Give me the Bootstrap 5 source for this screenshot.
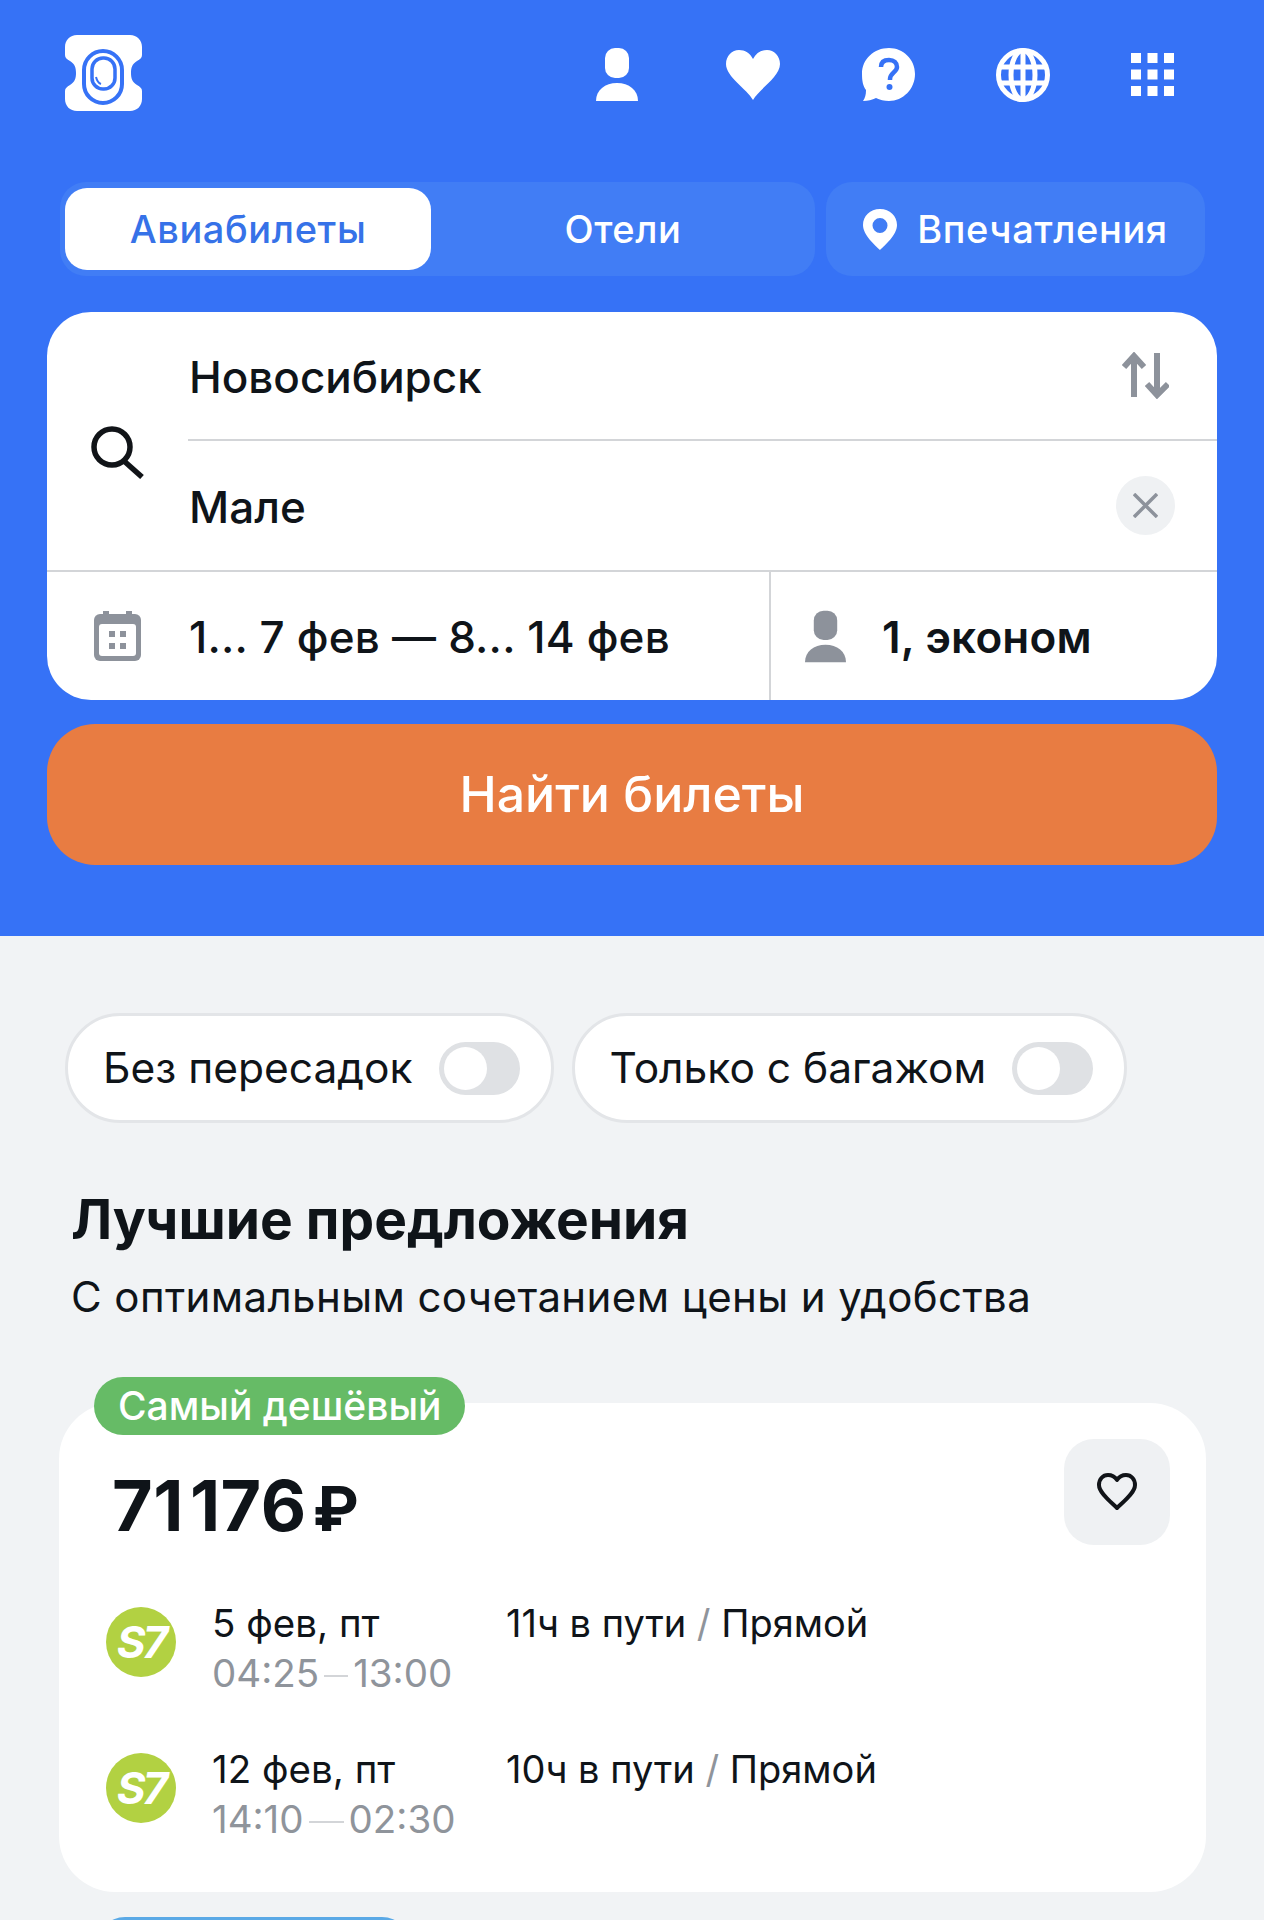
<!DOCTYPE html>
<html lang="ru">
<head>
  <meta charset="UTF-8" />
  <meta name="viewport" content="width=device-width, initial-scale=1" />
  <title>Авиабилеты</title>
  <link href="https://cdn.jsdelivr.net/npm/bootstrap@5.3.0/dist/css/bootstrap.min.css" rel="stylesheet" />
  <style>
    html, body {
      height: 1920px;
      overflow: hidden;
    }
    body {
      background: #f1f3f5;
      color: #0f1419;
      font-family: Inter, "Noto Sans", sans-serif;
    }
    .hero {
      background: #3672f6;
      height: 936px;
      padding: 35px 47px 0;
    }
    .brand-logo {
      margin-left: 18px;
    }
    .top-icons {
      gap: 81px;
      margin-right: 43px;
      margin-top: 3px;
    }
    .top-icons .first-icon {
      margin-right: 7px;
    }
    .top-icons .heart-icon {
      margin-right: 1px;
    }
    .tabs-row {
      margin-top: 71px;
      margin-left: 13px;
      margin-right: 12px;
      gap: 11px;
    }
    .tabs-group, .tab-single {
      background: #417df5;
      border-radius: 26px;
      height: 94px;
    }
    .tabs-group {
      width: 755px;
      padding: 6px 0 6px 5px;
    }
    .tab-single {
      width: 379px;
      gap: 20px;
    }
    .tab-item {
      color: #fff;
      font-size: 38px;
      font-weight: 500;
      letter-spacing: .6px;
    }
    .tab-active {
      background: #fff;
      color: #3672e8;
      width: 366px;
      height: 82px;
      border-radius: 22px;
    }
    .search-box {
      background: #fff;
      border-radius: 44px;
      margin-top: 36px;
      height: 388px;
      overflow: hidden;
      font-size: 44px;
      font-weight: 500;
    }
    .search-icon-col {
      width: 141px;
      padding: 22px 0 0 44px;
    }
    .search-line {
      height: 129px;
      padding-left: 1px;
    }
    .field-text {
      padding-top: 3px;
    }
    .field-low {
      padding-top: 1px;
      letter-spacing: .2px;
    }
    .line-sep {
      border-bottom: 2px solid #d3d5d8;
    }
    .swap-icon {
      margin-right: 48px;
    }
    .clear-btn {
      width: 59px;
      height: 59px;
      margin-right: 42px;
      background: #eff1f3;
    }
    .search-bottom {
      height: 130px;
      border-top: 2px solid #d3d5d8;
    }
    .dates-cell {
      width: 724px;
      padding-left: 47px;
      gap: 48px;
      border-right: 2px solid #d3d5d8;
    }
    .people-cell {
      padding-left: 34px;
      gap: 36px;
      font-weight: 600;
    }
    .find-btn {
      display: block;
      width: 100%;
      height: 141px;
      margin-top: 24px;
      border: 0;
      border-radius: 48px;
      background: #e87c42;
      color: #fff;
      font-size: 50px;
      font-weight: 500;
    }
    .find-btn:hover {
      background: #e87c42;
      color: #fff;
    }
    .filters {
      margin-top: 77px;
      padding-left: 65px;
      gap: 18px;
    }
    .filter-pill {
      height: 110px;
      padding: 0 31px 0 35px;
      gap: 26px;
      background: #fff;
      border: 3px solid #e3e5e8;
      border-radius: 55px;
      font-size: 42.500px;
    }
    .toggle-track {
      display: block;
      width: 81px;
      height: 53px;
      padding: 5px;
      background: #dfe1e4;
      border-radius: 27px;
    }
    .toggle-knob {
      display: block;
      width: 43px;
      height: 43px;
      background: #fff;
      border-radius: 50%;
    }
    .best-title {
      margin: 64px 0 0 71px;
      font-size: 55px;
      font-weight: 700;
      line-height: 64px;
    }
    .best-sub {
      margin: 20px 0 0 71px;
      font-size: 42px;
      line-height: 52px;
      letter-spacing: .4px;
    }
    .offer-card {
      margin: 80px 58px 0 59px;
      height: 489px;
      border: 0;
      border-radius: 56px;
      padding: 0 36px 0 47px;
    }
    .offer-tag {
      position: absolute;
      top: -26px;
      left: 35px;
      height: 58px;
      padding: 0 24px;
      background: #66bb66;
      color: #fff;
      border-radius: 29px;
      font-size: 39px;
      font-weight: 500;
      line-height: 58px;
    }
    .price {
      margin: 0 0 0 6px;
      padding-top: 63px;
      font-size: 70px;
      font-weight: 700;
      line-height: 80px;
      letter-spacing: .5px;
    }
    .price-currency {
      font-size: 62px;
      margin-left: 6px;
    }
    .fav-btn {
      width: 106px;
      height: 106px;
      margin-top: 36px;
      border-radius: 30px;
      background: #eff1f3;
    }
    .flight-row {
      height: 147px;
      font-size: 38.500px;
      line-height: 50px;
    }
    .flight-first {
      margin-top: 52px;
    }
    .s7-logo {
      width: 70px;
      height: 70px;
      background: #b2d142;
      color: #fff;
      font-size: 44px;
      font-weight: 700;
      font-style: italic;
      letter-spacing: -3px;
      margin-top: 6px;
      margin-right: 36px;
    }
    .flight-dates {
      width: 294px;
      margin-top: -3px;
    }
    .flight-route {
      margin-top: -3px;
      font-size: 38px;
    }
    .flight-times {
      color: #8f949b;
    }
    .time-dash {
      display: inline-block;
      height: 2px;
      background: #d3d5d8;
      vertical-align: middle;
      margin: 0 5px;
    }
    .flight-slash {
      color: #8f949b;
    }
    .next-clip {
      height: 3px;
      margin: 25px 0 0 96px;
      width: 315px;
      overflow: hidden;
    }
    .next-tag {
      height: 58px;
      background: #5aa9e6;
      border-radius: 29px;
    }
  </style>
</head>
<body>

<div class="hero">
  <div class="d-flex align-items-center justify-content-between">
    <!-- логотип -->
    <svg class="brand-logo" width="77" height="76" viewBox="0 0 77 76">
      <path fill="#fff" d="M12 0H65C72 0 77 5 77 12V20C77 23 75 24 72 26C67 29 66 33 66 38C66 43 67 47 72 50C75 52 77 53 77 56V64C77 71 72 76 65 76H12C5 76 0 71 0 64V56C0 53 2 52 5 50C10 47 11 43 11 38C11 33 10 29 5 26C2 24 0 23 0 20V12C0 5 5 0 12 0Z" />
      <rect x="19" y="16" width="38" height="52" rx="19" fill="none" stroke="#3672f6" stroke-width="4" />
      <rect x="27" y="23" width="23" height="31" rx="11" fill="none" stroke="#3672f6" stroke-width="3.500" />
      <path d="M31 42C32 46 33 48 36 49" fill="none" stroke="#3672f6" stroke-width="2" />
    </svg>
    <div class="top-icons d-flex align-items-center">
      <svg class="first-icon" width="42" height="53" viewBox="0 0 42 53">
        <rect x="9" width="24" height="30" rx="10" fill="#fff" />
        <path fill="#fff" d="M0 53C0 42 9 35 21 35C33 35 42 42 42 53Z" />
      </svg>
      <svg class="heart-icon" width="54" height="50" viewBox="0 0 54 50">
        <path fill="#fff" d="M27 50C21 39 0 27 0 14C0 6 6 0 13 0C19 0 24 3 27 9C30 3 35 0 41 0C48 0 54 6 54 14C54 27 33 39 27 50Z" />
      </svg>
      <svg width="53" height="53" viewBox="0 0 53 53">
        <path fill="#fff" d="M27 0C41 0 53 11 53 26C53 41 41 53 27 53C22 53 18 52 14 50C10 52 6 53 1 53C3 50 4 47 4 42C1 38 0 33 0 26C0 11 12 0 27 0Z" />
        <path fill="none" stroke="#3672f6" stroke-width="4.500" d="M19 19C19 14 22 12 27 12C32 12 35 15 35 19C35 24 28 25 28 31V32" />
        <circle cx="27.500" cy="39" r="3" fill="#3672f6" />
      </svg>
      <svg width="54" height="54" viewBox="0 0 54 54" fill="none" stroke="#fff" stroke-width="5">
        <circle cx="27" cy="27" r="24.500" />
        <ellipse cx="27" cy="27" rx="12" ry="24.500" />
        <path d="M27 2V52M5 19H49M5 35H49" />
      </svg>
      <svg width="43" height="43" viewBox="0 0 43 43" fill="#fff">
        <rect width="10" height="10" /><rect x="16.500" width="10" height="10" /><rect x="33" width="10" height="10" />
        <rect y="16.500" width="10" height="10" /><rect x="16.500" y="16.500" width="10" height="10" /><rect x="33" y="16.500" width="10" height="10" />
        <rect y="33" width="10" height="10" /><rect x="16.500" y="33" width="10" height="10" /><rect x="33" y="33" width="10" height="10" />
      </svg>
    </div>
  </div>

  <!-- вкладки -->
  <div class="tabs-row d-flex">
    <div class="tabs-group d-flex">
      <div class="tab-item tab-active d-flex align-items-center justify-content-center">Авиабилеты</div>
      <div class="tab-item flex-grow-1 d-flex align-items-center justify-content-center">Отели</div>
    </div>
    <div class="tab-single tab-item d-flex align-items-center justify-content-center">
      <svg width="34" height="41" viewBox="0 0 34 41">
        <path fill="#fff" fill-rule="evenodd" d="M17 0C7 0 0 7 0 16C0 26 12 36 17 41C22 36 34 26 34 16C34 7 27 0 17 0ZM17 9A7.500 7.500 0 1 1 17 24A7.500 7.500 0 1 1 17 9Z" />
      </svg>
      <span>Впечатления</span>
    </div>
  </div>

  <!-- форма поиска -->
  <div class="search-box">
    <div class="d-flex">
      <div class="search-icon-col d-flex align-items-center">
        <svg width="53" height="53" viewBox="0 0 53 53" fill="none" stroke="#111418" stroke-width="5.500">
          <circle cx="21" cy="21" r="18" />
          <path d="M33 35L51 51" />
        </svg>
      </div>
      <div class="flex-grow-1">
        <div class="search-line line-sep d-flex align-items-center justify-content-between">
          <span class="field-text">Новосибирск</span>
          <svg class="swap-icon" width="47" height="47" viewBox="0 0 47 47" fill="none" stroke="#8d929b" stroke-width="6">
            <path d="M12 4V45M2 15L12 4L22 15M35 1V43M25 32L35 43L46 32" />
          </svg>
        </div>
        <div class="search-line d-flex align-items-center justify-content-between">
          <span class="field-text">Мале</span>
          <div class="clear-btn rounded-circle d-flex align-items-center justify-content-center">
            <svg width="25" height="25" viewBox="0 0 25 25" stroke="#8d929b" stroke-width="3.500">
              <path d="M1 1L24 24M24 1L1 24" />
            </svg>
          </div>
        </div>
      </div>
    </div>
    <div class="search-bottom d-flex">
      <div class="dates-cell d-flex align-items-center">
        <svg width="47" height="50" viewBox="0 0 47 50">
          <rect y="3" width="47" height="47" rx="6" fill="#8d929b" />
          <rect x="9" width="6" height="4" fill="#8d929b" /><rect x="32" width="6" height="4" fill="#8d929b" />
          <rect x="5" y="13" width="37" height="32" rx="3" fill="#fff" />
          <g fill="#8d929b">
            <rect x="15" y="20" width="6" height="6" /><rect x="26" y="20" width="6" height="6" />
            <rect x="15" y="32" width="6" height="6" /><rect x="26" y="32" width="6" height="6" />
          </g>
        </svg>
        <span class="field-low">1... 7 фев — 8... 14 фев</span>
      </div>
      <div class="people-cell d-flex align-items-center">
        <svg width="41" height="53" viewBox="0 0 42 53">
          <rect x="9" width="24" height="30" rx="10" fill="#8d929b" />
          <path fill="#8d929b" d="M0 53C0 42 9 35 21 35C33 35 42 42 42 53Z" />
        </svg>
        <span class="field-low">1, эконом</span>
      </div>
    </div>
  </div>

  <button type="button" class="btn find-btn">Найти билеты</button>
</div>

<!-- фильтры -->
<div class="filters d-flex">
  <div class="filter-pill d-flex align-items-center">
    <span>Без пересадок</span>
    <span class="toggle-track"><span class="toggle-knob"></span></span>
  </div>
  <div class="filter-pill d-flex align-items-center">
    <span>Только с багажом</span>
    <span class="toggle-track"><span class="toggle-knob"></span></span>
  </div>
</div>

<h2 class="best-title">Лучшие предложения</h2>
<p class="best-sub">С оптимальным сочетанием цены и удобства</p>

<!-- карточка предложения -->
<div class="card offer-card">
  <div class="offer-tag">Самый дешёвый</div>
  <div class="d-flex justify-content-between">
    <p class="price">71&#8202;176<span class="price-currency">₽</span></p>
    <div class="fav-btn d-flex align-items-center justify-content-center">
      <svg width="40" height="38" viewBox="0 0 40 38">
        <path fill="none" stroke="#111418" stroke-width="4" stroke-linejoin="round" d="M20 35C14 29 2 20 2 12C2 6 6 2 11 2C15 2 18 4 20 7C22 4 25 2 29 2C34 2 38 6 38 12C38 20 26 29 20 35Z" />
      </svg>
    </div>
  </div>
  <div class="flight-row flight-first d-flex">
    <div class="s7-logo rounded-circle d-flex align-items-center justify-content-center">S7</div>
    <div class="flight-dates">
      <div>5 фев, пт</div>
      <div class="flight-times">04:25<span class="time-dash" style="width: 24px"></span>13:00</div>
    </div>
    <div class="flight-route">11ч в пути <span class="flight-slash">/</span> Прямой</div>
  </div>
  <div class="flight-row d-flex">
    <div class="s7-logo rounded-circle d-flex align-items-center justify-content-center">S7</div>
    <div class="flight-dates">
      <div>12 фев, пт</div>
      <div class="flight-times">14:10<span class="time-dash" style="width: 35px"></span>02:30</div>
    </div>
    <div class="flight-route">10ч в пути <span class="flight-slash">/</span> Прямой</div>
  </div>
</div>

<!-- следующая карточка, видна только верхушка плашки -->
<div class="next-clip"><div class="next-tag"></div></div>

<script src="https://cdn.jsdelivr.net/npm/bootstrap@5.3.0/dist/js/bootstrap.bundle.min.js"></script>
</body>
</html>
